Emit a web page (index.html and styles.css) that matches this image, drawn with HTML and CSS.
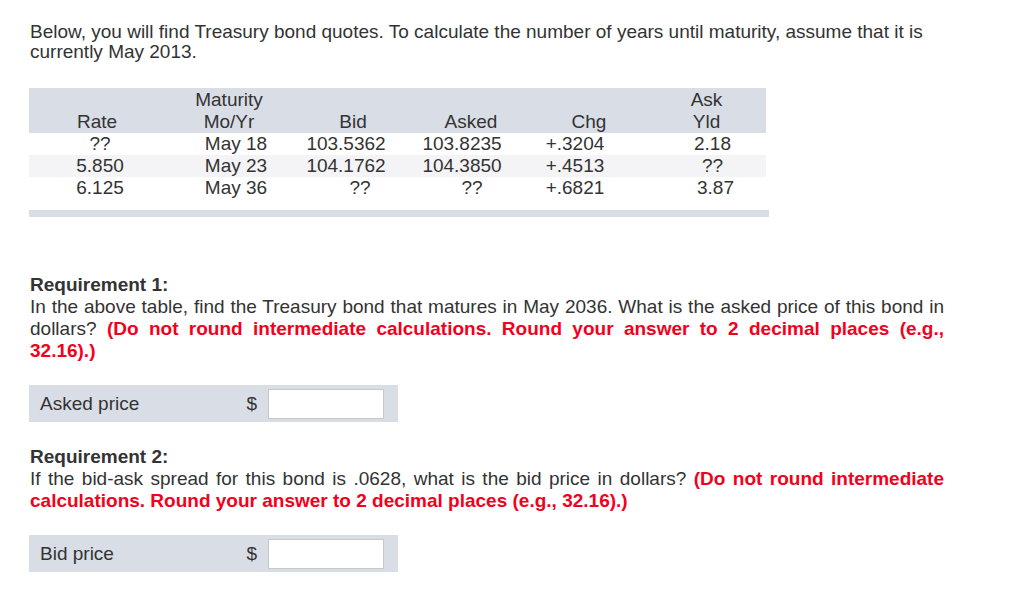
FILE: index.html
```html
<!DOCTYPE html>
<html>
<head>
<meta charset="utf-8">
<link rel="stylesheet" href="styles.css">
</head>
<body>
<div class="page">
  <p class="intro">Below, you will find Treasury bond quotes. To calculate the number of years until maturity, assume that it is currently May 2013.</p>

  <table class="quotes">
    <colgroup>
      <col class="c1"><col class="c2"><col class="c3"><col class="c4"><col class="c5"><col class="c6">
    </colgroup>
    <thead>
      <tr>
        <th class="h-rate"><br>Rate</th>
        <th class="h-mat">Maturity<br>Mo/Yr</th>
        <th class="h-bid"><br>Bid</th>
        <th class="h-ask"><br>Asked</th>
        <th class="h-chg"><br>Chg</th>
        <th class="h-yld">Ask<br>Yld</th>
      </tr>
    </thead>
    <tbody>
      <tr>
        <td>??</td><td class="mat">May 18</td><td>103.5362</td><td>103.8235</td><td>+.3204</td><td class="yld">2.18</td>
      </tr>
      <tr class="alt">
        <td>5.850</td><td class="mat">May 23</td><td>104.1762</td><td>104.3850</td><td>+.4513</td><td class="yld">??</td>
      </tr>
      <tr>
        <td>6.125</td><td class="mat">May 36</td><td class="q-bid">??</td><td class="q-ask">??</td><td>+.6821</td><td class="yld y3">3.87</td>
      </tr>
    </tbody>
  </table>
  <div class="table-foot"></div>

  <section class="req req1">
    <p class="req-title">Requirement 1:</p>
    <p class="req-text">In the above table, find the Treasury bond that matures in May 2036. What is the asked price of this bond in dollars? <strong class="note">(Do not round intermediate calculations. Round your answer to 2 decimal places (e.g., 32.16).)</strong></p>
  </section>

  <div class="answer">
    <span class="answer-label">Asked price</span>
    <span class="dollar">$</span>
    <input class="answer-input" type="text">
  </div>

  <section class="req req2">
    <p class="req-title">Requirement 2:</p>
    <p class="req-text">If the bid-ask spread for this bond is .0628, what is the bid price in dollars? <strong class="note">(Do not round intermediate calculations. Round your answer to 2 decimal places (e.g., 32.16).)</strong></p>
  </section>

  <div class="answer">
    <span class="answer-label">Bid price</span>
    <span class="dollar">$</span>
    <input class="answer-input" type="text">
  </div>
</div>
</body>
</html>
```

FILE: styles.css
```css
html, body {
  margin: 0;
  padding: 0;
  background: #ffffff;
}

body {
  font-family: "Liberation Sans", Arial, Helvetica, sans-serif;
  font-size: 19px;
  color: #333333;
}

.page {
  padding: 22px 0 0 29px;
  width: 914px;
}

p {
  margin: 0;
}

.intro {
  line-height: 20px;
  padding-left: 1px;
}

.quotes {
  margin-top: 26px;
  width: 737px;
  table-layout: fixed;
  border-collapse: collapse;
  font-size: 19px;
  color: #333333;
}

.c1 { width: 142px; }
.c2 { width: 130px; }
.c3 { width: 90px; }
.c4 { width: 142px; }
.c5 { width: 84px; }
.c6 { width: 149px; }

.quotes th {
  background: #d9dde6;
  font-weight: normal;
  line-height: 22px;
  padding: 0;
  text-align: center;
  vertical-align: bottom;
  height: 45px;
}

.quotes td {
  padding: 0;
  height: 22px;
  line-height: 22px;
  text-align: center;
  background: #ffffff;
}

.quotes tr.alt td {
  background: #f4f4f6;
}

.h-rate { padding-right: 6px !important; }
.h-mat { padding-right: 14px !important; }
.h-bid { padding-left: 14px !important; }
.h-ask { padding-left: 18px !important; }
.h-chg { padding-left: 28px !important; }
.h-yld { padding-left: 30px !important; }

.quotes td.yld { padding-left: 42px; }
.quotes td.y3 { padding-left: 48px; }
.quotes td.q-bid { padding-left: 28px; }
.quotes td.q-ask { padding-left: 20px; }

.table-foot {
  margin-top: 11px;
  width: 740px;
  height: 7px;
  background: #d9dde6;
}

.req {
  line-height: 22px;
  width: 914px;
  padding-left: 1px;
}

.req1 {
  margin-top: 57px;
}

.req2 {
  margin-top: 24px;
}

.req-title {
  font-weight: bold;
}

.req-text {
  text-align: justify;
}

.note {
  color: #f2001c;
  font-weight: bold;
}

.answer {
  margin-top: 23px;
  width: 369px;
  height: 37px;
  background: #d9dde6;
  display: flex;
  align-items: center;
  box-sizing: border-box;
  padding: 0 14px 0 11px;
}

.answer-label {
  flex: 1;
}

.dollar {
  margin-right: 11px;
}

.answer-input {
  width: 116px;
  height: 30px;
  box-sizing: border-box;
  border: 1px solid #c8c8c8;
  background: #ffffff;
  margin: 0;
  padding: 0;
  outline: none;
}
```
